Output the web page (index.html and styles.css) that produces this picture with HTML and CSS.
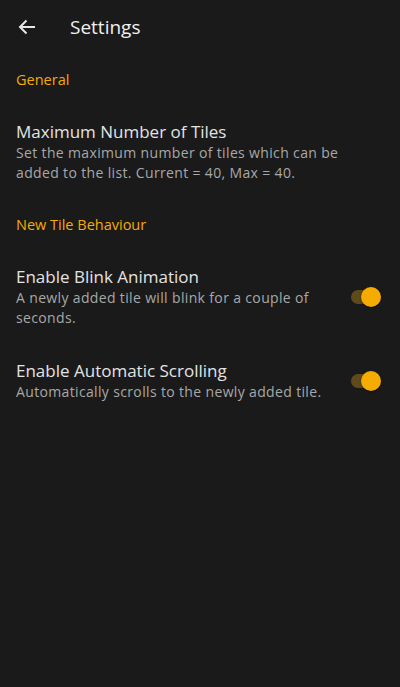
FILE: index.html
```html
<!DOCTYPE html>
<html>
<head>
<meta charset="utf-8">
<link rel="stylesheet" href="styles.css">
</head>
<body>
<div class="app">
  <header class="topbar">
    <svg class="back" width="18" height="16" viewBox="0 0 18 16">
      <path d="M17 8H2M8.5 1.5L2 8l6.5 6.5" fill="none" stroke="#e6e6e6" stroke-width="2"/>
    </svg>
    <div class="title">Settings</div>
  </header>
  <div class="category">General</div>
  <div class="item">
    <div class="text text-wide">
      <div class="item-title">Maximum Number of Tiles</div>
      <div class="item-desc">Set the maximum number of tiles which can be added to the list. Current = 40, Max = 40.</div>
    </div>
  </div>
  <div class="category">New Tile Behaviour</div>
  <div class="item">
    <div class="text">
      <div class="item-title">Enable Blink Animation</div>
      <div class="item-desc">A newly added tile will blink for a couple of seconds.</div>
    </div>
    <div class="switch"><span class="track"></span><span class="knob"></span></div>
  </div>
  <div class="item">
    <div class="text">
      <div class="item-title">Enable Automatic Scrolling</div>
      <div class="item-desc">Automatically scrolls to the newly added tile.</div>
    </div>
    <div class="switch"><span class="track"></span><span class="knob"></span></div>
  </div>
</div>
</body>
</html>
```

FILE: styles.css
```css
html, body {
  margin: 0;
  padding: 0;
  background: #1a1a1a;
}
body {
  font-family: "Open Sans", "Noto Sans", sans-serif;
  color: #e6e6e6;
}
.app {
  width: 400px;
  height: 687px;
  background: #1a1a1a;
}
.topbar {
  height: 54px;
  display: flex;
  align-items: center;
  padding-left: 18px;
}
.back {
  display: block;
  margin-right: 34px;
}
.title {
  font-size: 19px;
  color: #f0f0f0;
  line-height: 24px;
}
.category {
  padding: 16px 16px 15px;
  font-size: 14.5px;
  line-height: 20px;
  color: #f5ab00;
}
.item {
  display: flex;
  align-items: center;
  padding: 16px;
}
.text {
  flex: 1;
  min-width: 0;
  padding-right: 8px;
}
.text-wide {
  padding-right: 44px;
}
.item-title {
  font-size: 17px;
  line-height: 22px;
  color: #e3e3e3;
}
.item-desc {
  font-size: 14px;
  line-height: 20px;
  letter-spacing: 0.35px;
  color: #a8a8a8;
}
.switch {
  position: relative;
  width: 32px;
  height: 20px;
  flex: none;
  margin-right: 2px;
}
.track {
  position: absolute;
  left: 1px;
  top: 3px;
  width: 28px;
  height: 14px;
  border-radius: 7px;
  background: #5e4a1c;
}
.knob {
  position: absolute;
  right: 1px;
  top: 0;
  width: 20px;
  height: 20px;
  border-radius: 50%;
  background: #f5ab00;
  box-shadow: 0 1px 2px rgba(0,0,0,0.5);
}
```
